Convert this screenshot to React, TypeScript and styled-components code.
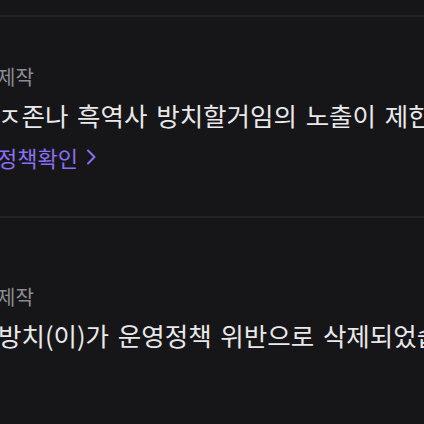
import React from 'react'
import styled, { createGlobalStyle } from 'styled-components'

const GlobalStyle = createGlobalStyle`
  html, body {
    margin: 0;
    padding: 0;
    background: #161618;
  }
  body {
    font-family: "Noto Sans CJK KR", "Noto Sans", sans-serif;
    overflow: hidden;
  }
`

const Page = styled.div`
  width: 424px;
  height: 424px;
  overflow: hidden;
  display: flex;
  flex-direction: column;
  padding-top: 15px;
  box-sizing: border-box;
`

const Item = styled.section<{ $top: number }>`
  display: flex;
  flex-direction: column;
  flex-shrink: 0;
  border-top: 2px solid #232327;
  height: 201px;
  box-sizing: border-box;
  padding-top: ${p => p.$top}px;
  margin-left: -3px;
  white-space: nowrap;
`

const Maker = styled.div`
  color: #8c8c91;
  font-size: 20px;
  line-height: 26px;
`

const Message = styled.div`
  color: #e9e9eb;
  font-size: 25.5px;
  line-height: 34px;
  word-spacing: 3px;
  margin-top: 8px;
  margin-left: 1px;
`

const PolicyLink = styled.a`
  display: flex;
  align-items: center;
  gap: 8px;
  color: #8a6ff2;
  font-size: 22px;
  line-height: 26px;
  margin-top: 12px;
  text-decoration: none;
`

const Chevron = () => (
  <svg width="11" height="16" viewBox="0 0 11 16" fill="none">
    <path d="M2 1.5l6.5 6.5L2 14.5" stroke="#8a6ff2" strokeWidth="2" strokeLinecap="round" strokeLinejoin="round" />
  </svg>
)

const notices = [
  { maker: '제작', text: 'ㅈ존나 흑역사 방치할거임의 노출이 제한되었습니다', link: true, top: 47 },
  { maker: '제작', text: '방치(이)가 운영정책 위반으로 삭제되었습니다', link: false, top: 66 },
]

const App = () => (
  <>
    <GlobalStyle />
    <Page>
      {notices.map((n, i) => (
        <Item key={i} $top={n.top}>
          <Maker>{n.maker}</Maker>
          <Message>{n.text}</Message>
          {n.link && (
            <PolicyLink href="#">
              정책확인 <Chevron />
            </PolicyLink>
          )}
        </Item>
      ))}
    </Page>
  </>
)

export default App
